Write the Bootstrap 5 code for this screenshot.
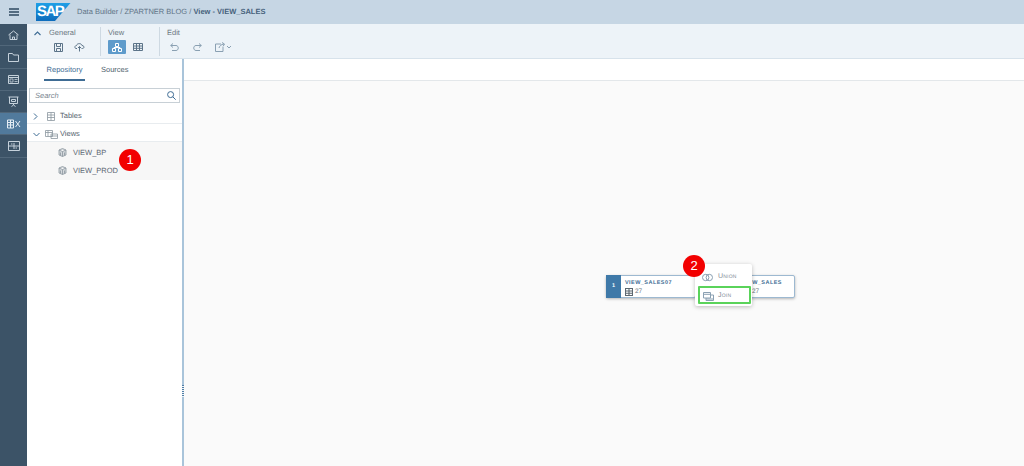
<!DOCTYPE html>
<html lang="en">
<head>
<meta charset="utf-8">
<title>Data Builder</title>
<link href="https://cdn.jsdelivr.net/npm/bootstrap@5.3.0/dist/css/bootstrap.min.css" rel="stylesheet">
<style>
html,body{height:466px;overflow:hidden}
body{font-family:"Liberation Sans",Arial,sans-serif;font-size:7.5px;color:#4a5a68;background:#fff;text-rendering:geometricPrecision}
svg{display:block;fill:none;stroke:currentColor;stroke-width:1}
.shell-head{height:24px;background:#c6d6e4}
.menu-cell{width:27px;color:#2f4a60}
.sap-logo{width:35px;height:18px;margin:-1px 0 0 9px;position:relative}
.sap-logo svg{stroke:none;position:absolute;left:0;top:0}
.sap-logo span{position:relative;display:block;padding:1px 0 0 1px;color:#fff;font:700 15px/16px "Liberation Sans",sans-serif;letter-spacing:-1.5px}
.crumbs{font-size:7.5px;color:#5f7486;margin-left:6px}
.crumbs b{color:#46627c;font-weight:700}
.main-area{height:442px}
.rail{width:27px;background:#3c5367}
.rail-item{height:22.3px;color:#c5d1db;border-bottom:1px solid #51677a}
.rail-item.on{background:#517a9c;color:#e4edf4}
.tool-band{height:35px;background:#edf3f8;border-bottom:1px solid #d7e2eb;padding-left:7px}
.chev{color:#3d6c94;width:11px;padding-top:7px}
.tool-sec{padding:4px 9px 0 0;border-right:1px solid #ced9e2;height:29px;margin-top:3px;margin-right:7px}
.tool-sec.last{border-right:0}
.tool-title{font-size:7.5px;line-height:10px;color:#6a7680;margin-top:-3px}
.tool-btn{width:18px;height:14px;color:#5c7489;margin-top:2px;margin-right:3px}
.tool-btn.on{background:#5e9bcb;color:#fff;border-radius:1px}
.tool-btn.dim{color:#8aa0b2;width:14px}
.tool-btn.redo{margin-left:6px}
.tool-btn.share{margin-left:8px;width:18px}
.side{width:155px;background:#fff}
.split{width:2px;background:#a9c4da;position:relative}
.body-row{min-height:0}
.tabs-row{height:22px;padding-left:17px;gap:16px;font-size:7.5px}
.tab-a{color:#3e6c94;border-bottom:2px solid #3e6c94;height:22px;width:41px;text-align:center;line-height:22px}
.tab-b{color:#4f5f6d;line-height:22px}
.search-box{height:15px;margin:7px 2px 0 2px;border:1px solid #c8d0d6;padding:0 3px 0 5px;font-style:italic;color:#7b8791;font-size:7.5px;background:#fff}
.search-box svg{color:#3e6c94}
.tree-top{margin-top:3px}
.tree-row{height:18px;padding:3px 0 0 6px;border-bottom:1px solid #e8ecef;font-size:7.5px;color:#55636f}
.tree-row .arr{width:11px;color:#3e6c94}
.tree-row .ic{width:14px;color:#8c979f;margin-right:2px}
.tree-sub{background:#f7f7f7;height:38px;padding-top:1px}
.tree-leaf{height:18.500px;padding-left:31px;font-size:7.5px;color:#5a6672}
.tree-leaf svg{color:#8c979f;margin-right:6px;fill:#d5d9dc}
.canvas-wrap{background:#fafafa;position:relative;min-width:0}
.canvas-top{height:22px;background:#fff;border-bottom:1px solid #e3e7ea}
.grip{position:absolute;left:0;top:326px;width:2px;height:12px;background:#eef3f7;background-image:repeating-linear-gradient(#4f7ea6 0 1px,transparent 1px 2px)}
.num-dot{position:absolute;width:22px;height:22px;border-radius:50%;background:#f20000;color:#fff;font-size:13px;line-height:22px;text-align:center;z-index:5}
.dot-one{left:119px;top:149px}
.dot-two{left:683px;top:255px}
.flow-node{position:absolute;top:275px;height:23px;background:#fff;border:1px solid #9db9d1;border-radius:2px;box-shadow:0 1px 3px rgba(0,0,0,.28)}
.node-a{left:606px;width:90px}
.node-b{left:740px;width:55px}
.node-b .node-name{margin-left:-3px}
.node-num{width:15px;background:#3f79a8;color:#fff;font-size:5.5px;font-weight:700;margin:-1px 0 -1px -1px}
.node-name{font-size:5.5px;font-weight:700;color:#3e6c94;letter-spacing:.45px;line-height:7px;padding-top:4px;white-space:nowrap}
.node-cnt{font-size:6.5px;line-height:9px;color:#6b7680;white-space:nowrap}
.node-a .node-cnt svg{color:#5d6870;margin-right:2px}
.node-b .node-cnt{padding-left:7px}
.pop-menu{position:absolute;left:695px;top:264px;width:57px;height:42px;background:#fff;box-shadow:0 1px 4px rgba(0,0,0,.25);border-radius:2px;z-index:4}
.pop-line{height:19px;padding-left:7px;font-size:7px;color:#7f8c97;font-variant:small-caps;letter-spacing:.2px}
.pop-line svg{color:#8aa0b2;margin-right:5px}
.pop-line.first{height:22px;padding-top:4px}
.pop-line.sel{margin:0 1px 0 3px;padding:2px 0 0 3px;border:2px solid #5ad35a;border-radius:1px;height:18px}
.pop-line.sel svg{margin-right:4px}
</style>
</head>
<body>
<header class="shell-head d-flex align-items-center">
  <div class="menu-cell d-flex justify-content-center">
    <svg width="10" height="8" viewBox="0 0 10 8"><path d="M0 1h10M0 4h10M0 7h10" stroke-width="1.500"/></svg>
  </div>
  <div class="sap-logo">
    <svg width="35" height="18" viewBox="0 0 35 18"><defs><linearGradient id="sg" x1="0" y1="0" x2="0" y2="1"><stop offset="0" stop-color="#1f9fe6"/><stop offset="1" stop-color="#0d6cbc"/></linearGradient></defs><path d="M0 0H34.500L19 18H0Z" fill="url(#sg)"/></svg>
    <span>SAP</span>
  </div>
  <div class="crumbs">Data Builder / ZPARTNER BLOG / <b>View - VIEW_SALES</b></div>
</header>
<div class="main-area d-flex">
  <nav class="rail d-flex flex-column">
    <div class="rail-item d-flex align-items-center justify-content-center"><svg width="11" height="10" viewBox="0 0 11 10"><path d="M.5 5 5.500 1l5 4M2 4.500V9.500h7V4.500M4.500 9.500V7h2v2.500"/></svg></div>
    <div class="rail-item d-flex align-items-center justify-content-center"><svg width="11" height="10" viewBox="0 0 11 10"><path d="M.5 1.500h4l1 1.500h5v6.500H.5Z"/></svg></div>
    <div class="rail-item d-flex align-items-center justify-content-center"><svg width="11" height="9" viewBox="0 0 11 9"><path d="M.5.500h10v8H.5ZM.5 2.500h10"/><path d="M2 4h3v3H2ZM6.500 4.500h3M6.500 6.500h3" stroke-width=".8"/></svg></div>
    <div class="rail-item d-flex align-items-center justify-content-center"><svg width="11" height="11" viewBox="0 0 11 11"><path d="M.5 1h10M1.500 1v6.500h8V1M5.500 7.500V9M3.500 10.500l2-1.500 2 1.500M3.500 3.500h4v2h-4Z"/></svg></div>
    <div class="rail-item on d-flex align-items-center justify-content-center"><svg width="14" height="10" viewBox="0 0 14 10" stroke-width="1.200"><path d="M.5 1h6v8h-6ZM.5 3.500h6M.5 6h6M3.500 1v8M8.500 2l4.500 6M13 2 8.500 8"/></svg></div>
    <div class="rail-item d-flex align-items-center justify-content-center"><svg width="12" height="10" viewBox="0 0 12 10"><path d="M.5.500h11v9H.5ZM.5 5h11M6 2v6M3 3h1.500M7.500 7H9"/></svg></div>
  </nav>
  <div class="flex-grow-1 d-flex flex-column min-w-0">
    <div class="tool-band d-flex">
      <div class="chev"><svg width="7" height="5" viewBox="0 0 7 5"><path d="M.5 4 3.500 1l3 3" stroke-width="1.100"/></svg></div>
      <div class="tool-sec">
        <div class="tool-title ps-1">General</div>
        <div class="d-flex ps-1">
          <div class="tool-btn d-flex align-items-center justify-content-center"><svg width="9" height="9" viewBox="0 0 9 9"><path d="M.5.500h8v8h-8ZM2.500.500v3h4v-3M2.500 8.500v-3h4v3"/></svg></div>
          <div class="tool-btn d-flex align-items-center justify-content-center"><svg width="11" height="10" viewBox="0 0 11 10"><path d="M3 6.500H2C.5 6.500.5 3.500 2.500 3.500 3 1 7.500 1 8 3.500c2.500 0 2.500 3 .5 3H7.500M5.500 9.500V4.500M4 6l1.500-1.500L7 6"/></svg></div>
        </div>
      </div>
      <div class="tool-sec">
        <div class="tool-title">View</div>
        <div class="d-flex">
          <div class="tool-btn on d-flex align-items-center justify-content-center"><svg width="10" height="9" viewBox="0 0 10 9"><path d="M3.500.500h3v3h-3ZM.5 5.500h3v3h-3ZM6.500 5.500h3v3h-3ZM5 3.500v1M2 5.500v-1h6v1"/></svg></div>
          <div class="tool-btn d-flex align-items-center justify-content-center"><svg width="10" height="8" viewBox="0 0 10 8"><path d="M.5.500h9v7h-9ZM.5 3h9M.5 5.300h9M3.500.5v7M6.500.5v7"/></svg></div>
        </div>
      </div>
      <div class="tool-sec last">
        <div class="tool-title">Edit</div>
        <div class="d-flex">
          <div class="tool-btn dim d-flex align-items-center justify-content-center"><svg width="9" height="8" viewBox="0 0 9 8"><path d="M3 .5.700 2.500 3 4.500M.7 2.500H6c3 0 3 5 0 5H2"/></svg></div>
          <div class="tool-btn dim redo d-flex align-items-center justify-content-center"><svg width="9" height="8" viewBox="0 0 9 8"><path d="M6 .5l2.300 2L6 4.500M8.300 2.500H3c-3 0-3 5 0 5h4"/></svg></div>
          <div class="tool-btn dim share d-flex align-items-center justify-content-center"><svg width="18" height="10" viewBox="0 0 18 10"><path d="M6 2H.5v7.500H8V5M4 6c.5-2 2-3.500 5-4M7 .5 9.500 2 8 4.500M12 4l2 2 2-2"/></svg></div>
        </div>
      </div>
    </div>
    <div class="flex-grow-1 d-flex body-row">
      <aside class="side d-flex flex-column">
        <div class="tabs-row d-flex"><div class="tab-a">Repository</div><div class="tab-b">Sources</div></div>
        <div class="search-box d-flex align-items-center justify-content-between"><span>Search</span><svg width="9" height="9" viewBox="0 0 9 9"><circle cx="3.600" cy="3.600" r="3"/><path d="M5.800 5.800 8.700 8.700"/></svg></div>
        <div class="tree-row tree-top d-flex align-items-center"><span class="arr"><svg width="5" height="7" viewBox="0 0 5 7"><path d="M1 .5l3 3-3 3"/></svg></span><span class="ic d-flex justify-content-center"><svg width="8" height="9" viewBox="0 0 8 9"><path d="M.5.500h7v8h-7ZM.5 3h7M.5 5.500h7M4 .5v8" stroke-width=".8"/></svg></span>Tables</div>
        <div class="tree-row d-flex align-items-center"><span class="arr"><svg width="7" height="5" viewBox="0 0 7 5"><path d="M.5 1l3 3 3-3"/></svg></span><span class="ic d-flex justify-content-center"><svg width="13" height="9" viewBox="0 0 13 9"><path d="M.5.500h7v6h-7ZM.5 2.500h7M3 .5v6" stroke-width=".8"/><path d="M6 4h6.500v4.500H6ZM6 6h6.500" stroke-width=".8"/></svg></span>Views</div>
        <div class="tree-sub">
          <div class="tree-leaf d-flex align-items-center"><svg width="9" height="9" viewBox="0 0 9 9"><path d="M1 2 4.500.5 8 2v5L4.500 8.500 1 7ZM1 2l3.500 1.500L8 2M4.500 3.500v5M2.500 4.500v3M6.500 4.500v3" stroke-width=".8"/></svg>VIEW_BP</div>
          <div class="tree-leaf d-flex align-items-center"><svg width="9" height="9" viewBox="0 0 9 9"><path d="M1 2 4.500.5 8 2v5L4.500 8.500 1 7ZM1 2l3.500 1.500L8 2M4.500 3.500v5M2.500 4.500v3M6.500 4.500v3" stroke-width=".8"/></svg>VIEW_PROD</div>
        </div>
      </aside>
      <div class="split"><div class="grip"></div></div>
      <div class="canvas-wrap flex-grow-1"><div class="canvas-top"></div></div>
    </div>
  </div>
</div>
<div class="num-dot dot-one">1</div>
<div class="num-dot dot-two">2</div>
<div class="flow-node node-a d-flex">
  <div class="node-num d-flex align-items-center justify-content-center">1</div>
  <div class="ps-1"><div class="node-name">VIEW_SALES07</div><div class="node-cnt d-flex align-items-center"><svg width="8" height="8" viewBox="0 0 8 8"><path d="M.5.500h7v7h-7ZM.5 3h7M.5 5.300h7M4 .5v7" stroke-width="1.100"/></svg>27</div></div>
</div>
<div class="flow-node node-b">
  <div class="ps-1"><div class="node-name">VIEW_SALES</div><div class="node-cnt">27</div></div>
</div>
<div class="pop-menu">
  <div class="pop-line first d-flex align-items-center"><svg width="11" height="9" viewBox="0 0 11 9"><circle cx="3.700" cy="4.500" r="3.200"/><circle cx="7.300" cy="4.500" r="3.200"/></svg>Union</div>
  <div class="pop-line sel d-flex align-items-center"><svg width="11" height="9" viewBox="0 0 11 9"><path d="M.5.500h7v5.500h-7ZM.5 2.300h7M3 6v2.500h7.500V3H7.500M3 7h7.500"/></svg>Join</div>
</div>
<script src="https://cdn.jsdelivr.net/npm/bootstrap@5.3.0/dist/js/bootstrap.bundle.min.js"></script>
</body>
</html>
